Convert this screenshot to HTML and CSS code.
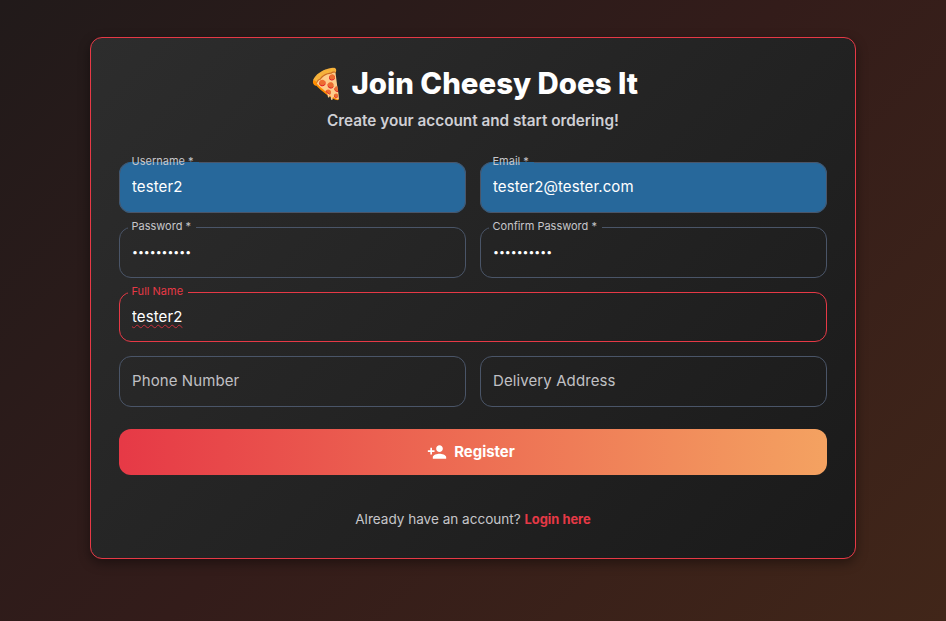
FILE: index.html
```html
<!DOCTYPE html>
<html>
  <head>
    <title>Register</title>
    <link rel="stylesheet" href="styles.css">
  </head>
  <body>
    <div class="card">
      <h1 class="title"><span class="pizza">🍕</span> Join Cheesy Does It</h1>
      <p class="subtitle">Create your account and start ordering!</p>
      <form class="form">
        <div class="row">
          <div class="field">
            <input class="input autofilled" type="text" value="tester2">
            <fieldset class="outline"><legend class="label">Username *</legend></fieldset>
          </div>
          <div class="field">
            <input class="input autofilled" type="text" value="tester2@tester.com">
            <fieldset class="outline"><legend class="label">Email *</legend></fieldset>
          </div>
        </div>
        <div class="row">
          <div class="field">
            <input class="input" type="password" value="tester2345">
            <fieldset class="outline"><legend class="label">Password *</legend></fieldset>
          </div>
          <div class="field">
            <input class="input" type="password" value="tester2345">
            <fieldset class="outline"><legend class="label">Confirm Password *</legend></fieldset>
          </div>
        </div>
        <div class="field">
          <input class="input" type="text" value="tester2">
          <span class="misspelled">tester2</span>
          <fieldset class="outline focused"><legend class="label">Full Name</legend></fieldset>
        </div>
        <div class="row">
          <div class="field">
            <input class="input" type="text" placeholder="Phone Number">
            <fieldset class="outline plain"></fieldset>
          </div>
          <div class="field">
            <input class="input" type="text" placeholder="Delivery Address">
            <fieldset class="outline plain"></fieldset>
          </div>
        </div>
        <button class="register" type="button">
          <svg class="register-icon" viewBox="0 0 24 24" fill="currentColor"><path d="M15 12c2.21 0 4-1.79 4-4s-1.79-4-4-4-4 1.79-4 4 1.79 4 4 4zm-9-2V7H4v3H1v2h3v3h2v-3h3v-2H6zm9 4c-2.67 0-8 1.34-8 4v2h16v-2c0-2.66-5.33-4-8-4z"/></svg>
          Register
        </button>
      </form>
      <p class="login">Already have an account? <a class="login-link" href="#">Login here</a></p>
    </div>
  </body>
</html>
```
FILE: styles.css
```css
* {
  box-sizing: border-box;
}
html, body {
  height: 100%;
}
body {
  margin: 0;
  padding-top: 37px;
  overflow: hidden;
  font-family: Inter, "Open Sans", sans-serif;
  background: linear-gradient(135deg, #211a1a 0%, #331c1a 50%, #412619 100%);
  color: white;
}
.card {
  width: 766px;
  height: 522px;
  margin: 0 auto;
  padding: 28px;
  border: 1px solid #e63946;
  border-radius: 12px;
  background: linear-gradient(135deg, #2d2d2d 0%, #1a1a1a 100%);
  box-shadow: 0 4px 12px rgba(0, 0, 0, 0.4);
  text-align: center;
}
.title {
  margin: 0;
  height: 36px;
  line-height: 36px;
  font-size: 29.4px;
  font-weight: 800;
}
.subtitle {
  margin: 8px 0 0;
  height: 22px;
  line-height: 22px;
  font-size: 15.3px;
  font-weight: 600;
  color: #cfcfd4;
}
.form {
  display: flex;
  flex-direction: column;
  gap: 14px;
  margin-top: 30.4px;
}
.row {
  display: grid;
  grid-template-columns: 1fr 1fr;
  gap: 14px;
}
.field {
  position: relative;
  height: 50.67px;
}
.input {
  display: block;
  width: 100%;
  height: 100%;
  padding: 0 13px 2px;
  border: 0;
  border-radius: 12px;
  outline: 0;
  background: transparent;
  color: white;
  font-family: inherit;
  font-size: 15px;
  letter-spacing: 0.1px;
}
.input::placeholder {
  color: #c0c0c4;
  opacity: 1;
}
.input[type="password"] {
  padding-bottom: 0;
  font-size: 10.5px;
  letter-spacing: 0;
}
.autofilled {
  background: #27689b;
}
.misspelled {
  position: absolute;
  top: 14px;
  left: 13px;
  color: transparent;
  font-size: 15px;
  letter-spacing: 0.1px;
  text-decoration: underline wavy #c9303c 1px;
  text-underline-offset: 3px;
  pointer-events: none;
}
.outline {
  position: absolute;
  top: -5px;
  left: 0;
  right: 0;
  bottom: 0;
  margin: 0;
  padding: 0 8px;
  border: 1px solid #4a5568;
  border-radius: 12px;
  pointer-events: none;
  text-align: left;
}
.plain {
  top: 0;
}
.focused {
  border-color: #e63946;
}
.label {
  position: relative;
  top: -1px;
  padding: 0 5px 0 3.5px;
  font-size: 11px;
  line-height: 11px;
  color: #c6c6ca;
}
.focused .label {
  color: #e63946;
}
.register {
  display: flex;
  align-items: center;
  justify-content: center;
  gap: 7px;
  height: 46px;
  margin-top: 8px;
  padding-right: 10px;
  border: 0;
  border-radius: 12px;
  background: linear-gradient(90deg, #e63946 0%, #f4a261 100%);
  color: white;
  font-family: inherit;
  font-size: 14.9px;
  font-weight: 700;
}
.register-icon {
  width: 20px;
  height: 20px;
}
.login {
  margin: 34px 0 0;
  font-size: 13.55px;
  line-height: 20px;
  color: #c6c6ca;
}
.login-link {
  color: #e63946;
  font-size: 12.9px;
  font-weight: 700;
  text-decoration: none;
}
```
